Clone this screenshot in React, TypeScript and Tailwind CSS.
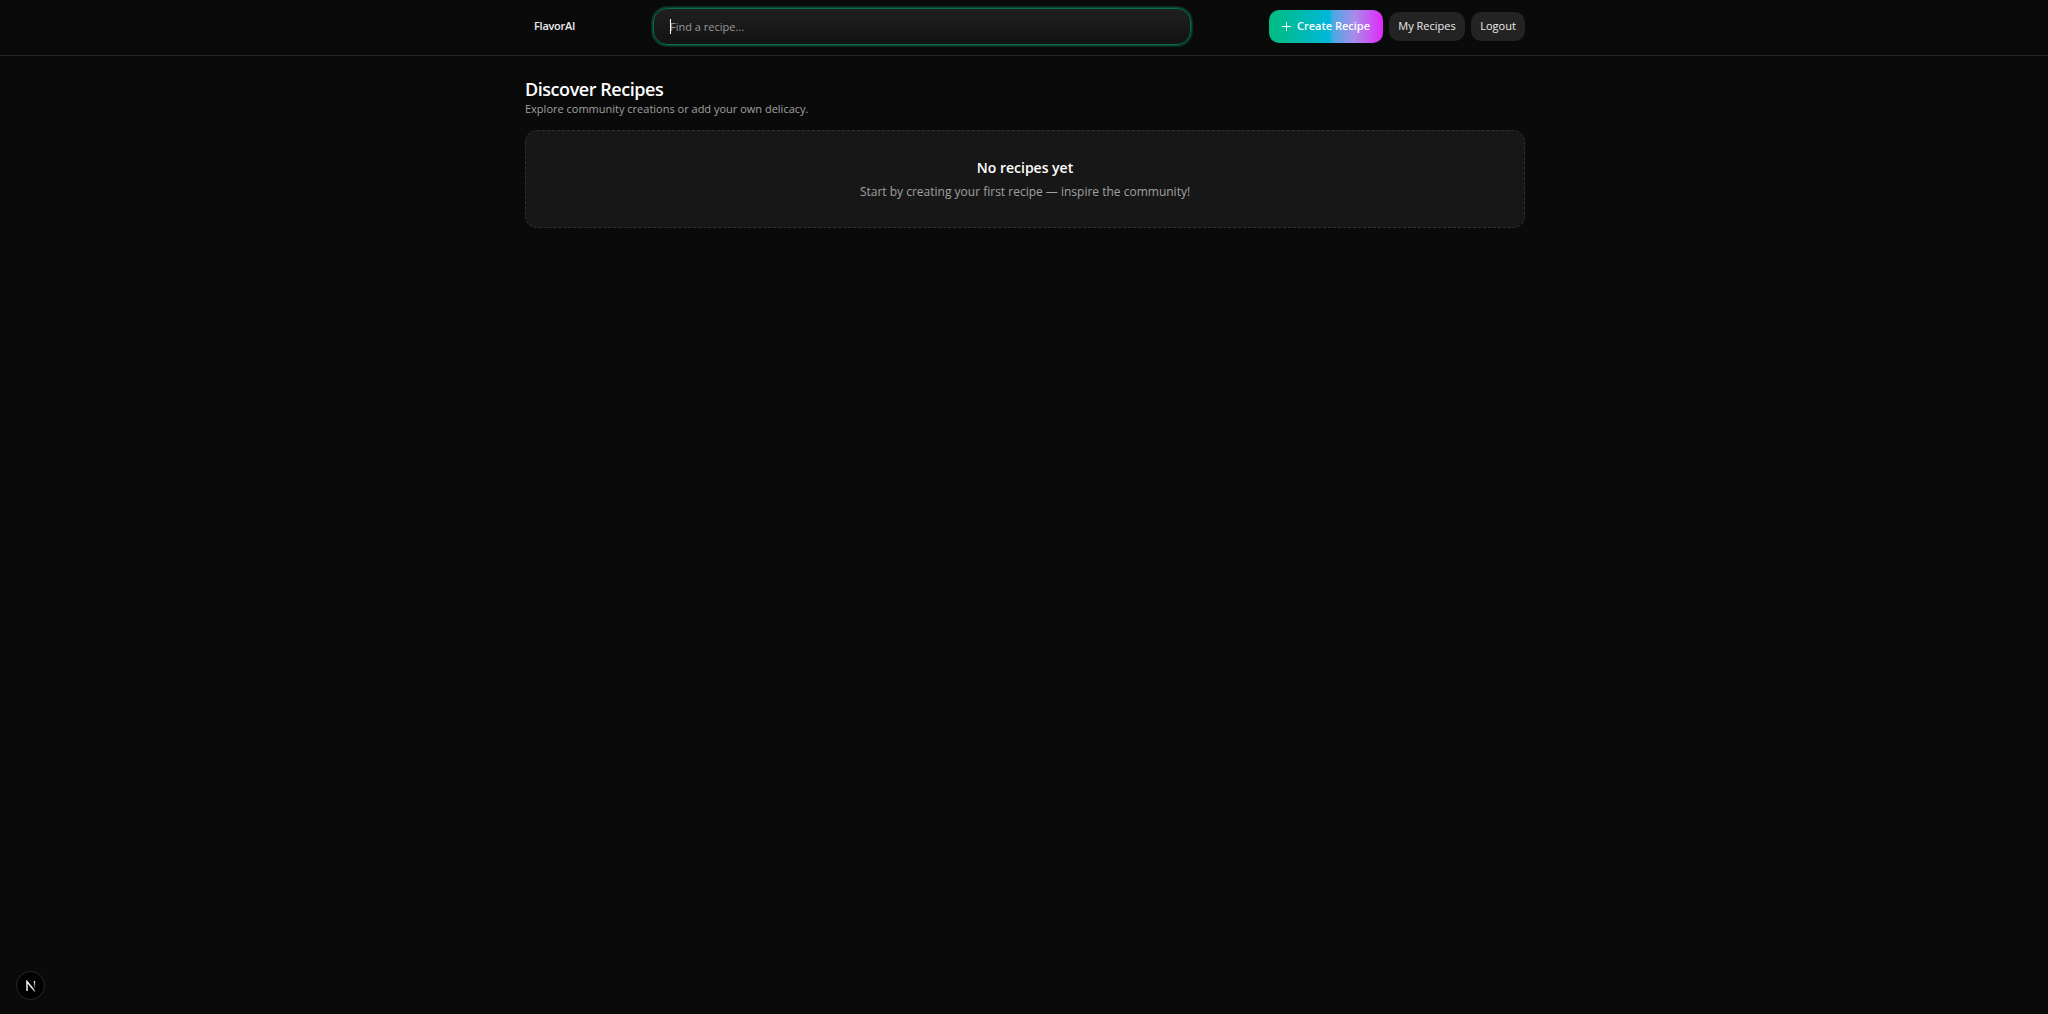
import React from "react";

function Header() {
  return (
    <header className="border-b border-[#242424] pr-6 pl-[26px]">
      <div className="mx-auto flex h-[55px] max-w-[1000px] items-center pb-[2px]">
        <a href="#" className="ml-[9px] w-[119px] text-[11px] font-semibold tracking-tight text-[#ededed]">
          FlavorAI
        </a>
        <form role="search" className="relative max-w-[538px] flex-1" onSubmit={(e) => e.preventDefault()}>
          <input
            type="text"
            aria-label="Find a recipe"
            placeholder="Find a recipe..."
            className="block h-[37px] w-full rounded-[14px] border border-[#096c4b] bg-linear-to-b from-[#202020] to-[#121212] px-4 text-[11px] text-[#ededed] caret-white shadow-[0_0_0_1px_#0a4431,0_0_0_2px_#09281e] outline-none placeholder:text-[#999999]"
          />
          <span aria-hidden="true" className="absolute top-[11px] left-[17px] h-[15px] w-px bg-white" />
        </form>
        <nav className="ml-auto flex items-center gap-1.5">
          <button
            type="button"
            className="flex h-[33px] w-[114px] items-center justify-center gap-1.5 rounded-[10px] bg-[linear-gradient(90deg,#00bc7d_0%,#00b8db_53%,#4aa9e2_56%,#a98bea_75%,#e12afb_100%)] text-[11px] font-semibold whitespace-nowrap text-white"
          >
            <svg width="9" height="9" viewBox="0 0 9 9" fill="none" stroke="currentColor" aria-hidden="true">
              <path d="M4.5 0.5v8M0.5 4.5h8" strokeLinecap="round" />
            </svg>
            Create Recipe
          </button>
          <button type="button" className="h-[29px] w-[76px] rounded-[10px] bg-[#232323] text-[11px] font-medium whitespace-nowrap text-[#ededed]">
            My Recipes
          </button>
          <button type="button" className="h-[29px] w-[54px] rounded-[10px] bg-[#232323] text-[11px] font-medium text-[#ededed]">
            Logout
          </button>
        </nav>
      </div>
    </header>
  );
}

export default function App() {
  return (
    <div className="min-h-screen bg-[#0a0a0a] font-['Open_Sans','Noto_Sans',sans-serif] text-white">
      <Header />
      <main className="pr-6 pl-[26px]">
        <div className="mx-auto max-w-[1000px] pt-5">
          <h1 className="text-[18px] leading-[26px] font-semibold tracking-tight">Discover Recipes</h1>
          <p className="text-[11px] leading-[14px] text-[#a1a1a1]">
            Explore community creations or add your own delicacy.
          </p>
          <section className="mt-[14px] flex flex-col items-center gap-1 rounded-[12px] border border-dashed border-[#303030] bg-[#171717] pt-[27px] pb-[25px] text-center">
            <h2 className="text-[14px] leading-5 font-semibold">No recipes yet</h2>
            <p className="text-[12px] leading-5 text-[#a1a1a1]">
              Start by creating your first recipe — inspire the community!
            </p>
          </section>
        </div>
      </main>
      <button
        type="button"
        aria-label="Open developer tools"
        className="fixed bottom-[14px] left-4 flex size-[29px] items-center justify-center rounded-full border border-[#292929] bg-black"
      >
        <svg width="12" height="12" viewBox="0 0 12 12" fill="none" aria-hidden="true">
          <defs>
            <linearGradient id="diagonal" x1="1" y1="1" x2="11" y2="12" gradientUnits="userSpaceOnUse">
              <stop offset="0.6" stopColor="white" />
              <stop offset="1" stopColor="white" stopOpacity="0.3" />
            </linearGradient>
            <linearGradient id="stem" x1="9" y1="1" x2="9" y2="9" gradientUnits="userSpaceOnUse">
              <stop stopColor="white" />
              <stop offset="1" stopColor="white" stopOpacity="0" />
            </linearGradient>
          </defs>
          <path d="M2 11V1.5L10 11.5" stroke="url(#diagonal)" strokeWidth="1.4" />
          <path d="M9.5 1v8" stroke="url(#stem)" strokeWidth="1.3" />
        </svg>
      </button>
    </div>
  );
}
